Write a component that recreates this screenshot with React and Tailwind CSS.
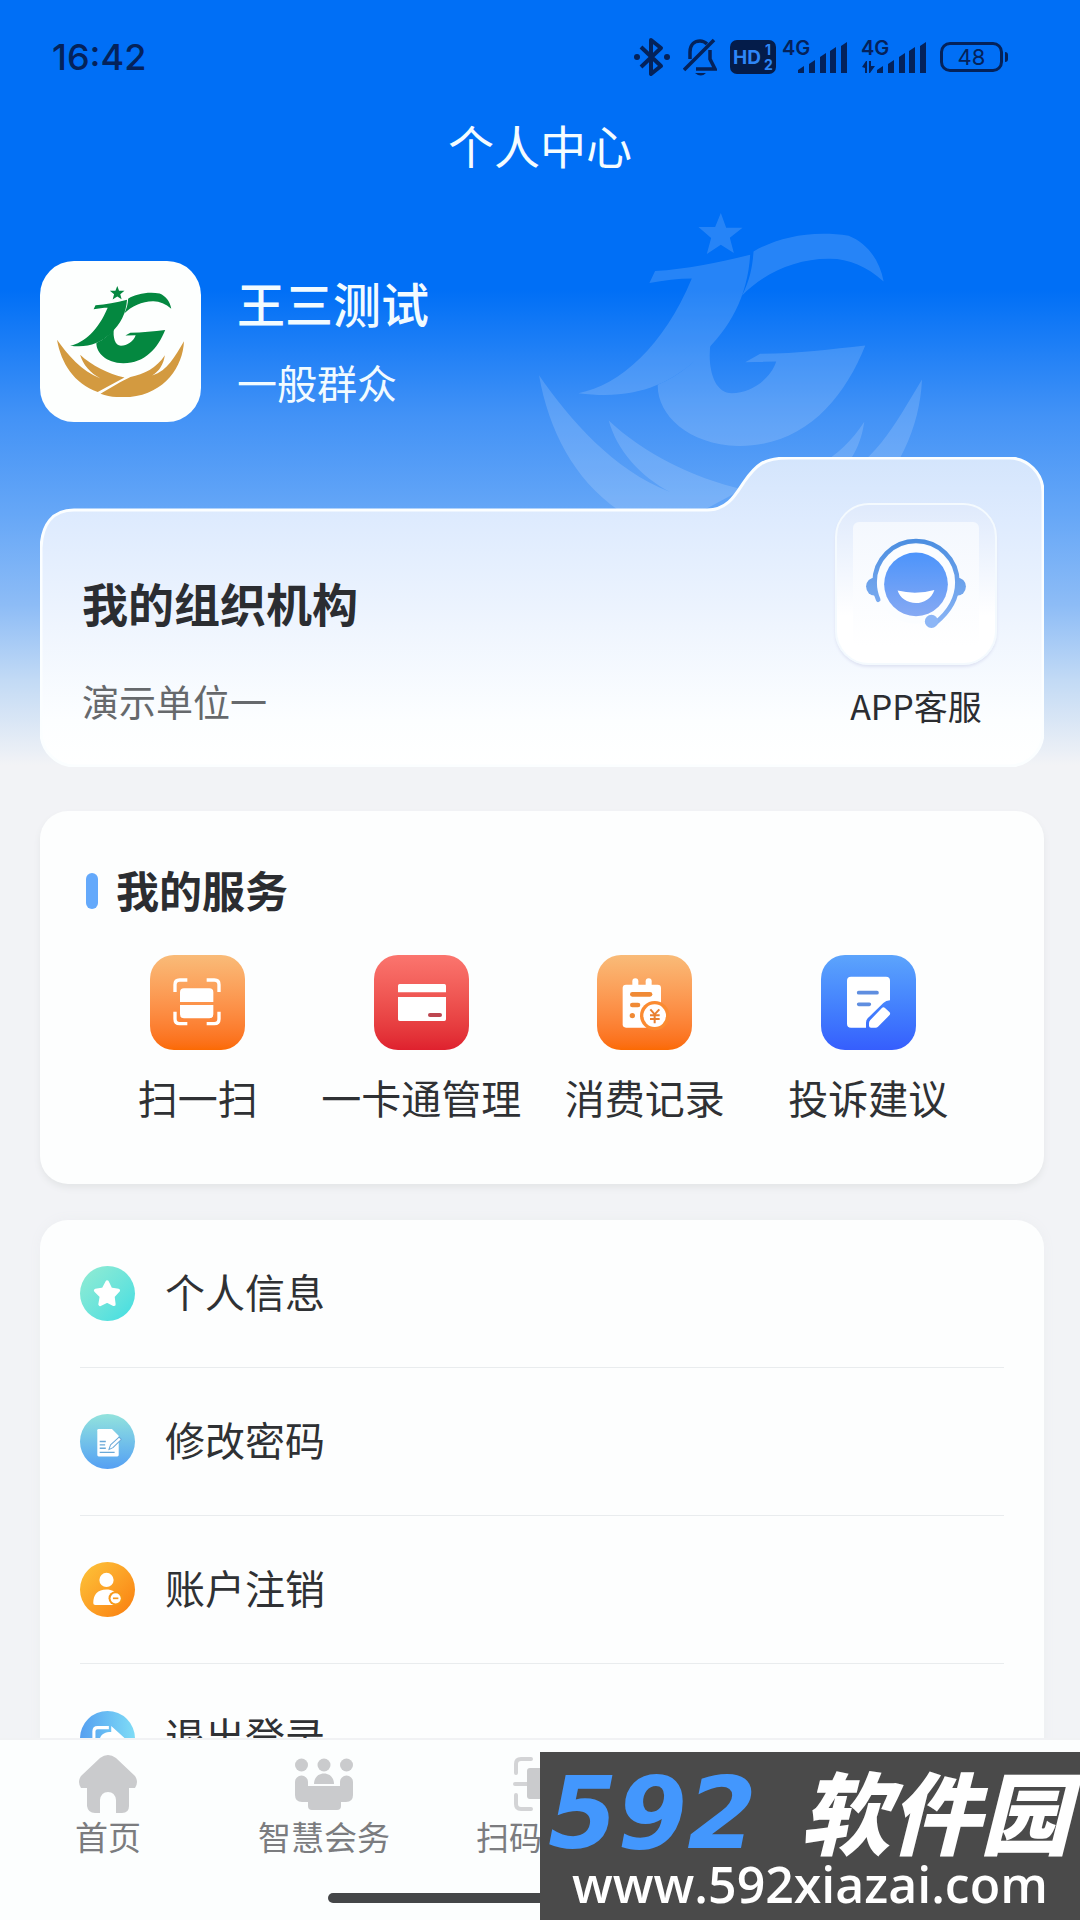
import { useState } from "react";

const INK = "#04225a";

/* ---------- Logo ---------- */

function Logo({ className, letters, hands }) {
    return (
        <svg viewBox="57 40 1148 1010" className={className} aria-hidden="true">
            <g fill={letters}>
                <path d="M602 40 L618 84 L667 84 L629 114 L641 160 L602 135 L560 163 L573 115 L535 82 L585 82 Z" />
                <path d="M405 214 C500 208 590 190 690 165 C682 290 630 385 545 465 C440 565 330 600 175 580 C300 555 430 440 515 236 C475 236 430 242 388 250 Z" />
                <path d="M700 155 C770 115 870 90 985 108 C1040 130 1078 180 1090 245 C1040 200 985 177 930 177 C830 175 730 220 665 288 C690 240 697 200 700 155 Z" />
                <path d="M572 425 C560 500 580 580 635 580 C690 580 750 540 768 485 L675 487 L720 462 C830 462 930 448 1035 437 C970 600 850 740 655 738 C500 735 410 640 413 555 C480 525 530 485 572 425 Z" />
            </g>
            <g fill={hands}>
                <path d="M57 526 C95 740 210 920 425 998 L667 868 C520 835 370 760 266 662 C290 750 360 830 450 876 C280 810 150 660 57 526 Z" />
                <path d="M450 1013 C540 960 640 900 721 862 C840 840 960 780 1032 666 C1020 750 980 810 918 850 C1060 800 1120 680 1205 539 C1195 770 1030 1020 700 1045 C610 1050 530 1040 450 1013 Z" />
            </g>
        </svg>
    );
}

/* ---------- Status bar ---------- */

function Signal({ data }) {
    return (
        <svg viewBox="0 0 66 36" className="h-9 w-[66px] overflow-visible" fill={INK}>
            <text x="0" y="16" fontFamily="Inter, sans-serif" fontSize="20" fontWeight="600">4G</text>
            {data && <path d="M1 28 L5 22 H6 V34 H4 V29 Z M8 22 H10 V27 L14 27 L9 34 H8 Z" />}
            <path d="M16 34 v-3 l6 -4 v7z M27 34 v-9 l6 -4 v13z M38 34 v-16 l6 -4 v20z M48 34 v-22 l6 -4 v26z M59 34 v-27 l6 -4 v31z" />
        </svg>
    );
}

function StatusBar() {
    return (
        <div className="flex h-[114px] items-center justify-between pr-[72px] pl-[52px] text-[#04225a]">
            <span className="font-['Inter',sans-serif] text-[36px] leading-none font-medium">16:42</span>
            <div className="flex items-center gap-[13px]">
                <svg viewBox="0 0 36 40" className="h-10 w-9" fill="none" stroke={INK} strokeWidth="4" strokeLinejoin="round">
                    <path d="M7 10 L27 29 L17 37 V3 L27 11 L7 30" />
                    <circle cx="3" cy="20" r="3" fill={INK} stroke="none" />
                    <circle cx="33" cy="20" r="3" fill={INK} stroke="none" />
                </svg>
                <svg viewBox="0 0 34 40" className="h-10 w-[34px]" fill="none" stroke={INK} strokeWidth="3.5">
                    <path d="M7 22 V15 C7 7 12 4 17 4 C20 4 22 5 24 7" />
                    <path d="M27 13 V22 L32 32 H13" />
                    <path d="M1 33 L31 3" />
                    <path d="M12 36 h11 q-5 5 -11 0z" fill={INK} stroke="none" />
                </svg>
                <div className="flex items-center gap-[6px]">
                    <svg viewBox="0 0 46 34" className="h-[34px] w-[46px]">
                        <rect width="46" height="34" rx="7" fill="#041c4a" />
                        <g fill="#2d86f7" fontFamily="Inter, sans-serif" fontWeight="700">
                            <text x="3" y="24" fontSize="19">HD</text>
                            <text x="35" y="15" fontSize="14">1</text>
                            <text x="34" y="30" fontSize="14">2</text>
                        </g>
                    </svg>
                    <Signal />
                </div>
                <Signal data />
                <div className="flex items-center gap-[2px]">
                    <span className="flex h-[30px] w-[63px] items-center justify-center rounded-[10px] border-3 border-[#04225a] font-['Inter',sans-serif] text-[22px] leading-none">48</span>
                    <span className="h-[10px] w-[3px] rounded-r-sm bg-[#04225a]" />
                </div>
            </div>
        </div>
    );
}

/* ---------- Organisation card ---------- */

function HeadsetIcon() {
    return (
        <svg viewBox="738 292 308 277" className="h-[91px] w-[102px]">
            <defs>
                <linearGradient id="headset" gradientUnits="userSpaceOnUse" x1="0" y1="294" x2="0" y2="567">
                    <stop offset="0" stopColor="#4b8ee0" />
                    <stop offset="1" stopColor="#8db6f6" />
                </linearGradient>
                <linearGradient id="face" x1="0" y1="0" x2="0" y2="1">
                    <stop offset="0" stopColor="#4c94fb" />
                    <stop offset="1" stopColor="#86a9f3" />
                </linearGradient>
            </defs>
            <circle cx="768" cy="440" r="28" fill="url(#headset)" />
            <circle cx="1016" cy="440" r="28" fill="url(#headset)" />
            <circle cx="892" cy="432" r="121" fill="#fbfdff" />
            <path d="M777 480 C768 460 766 445 766 427 A126 126 0 0 1 1018 427 C1018 480 990 520 950 552" fill="none" stroke="url(#headset)" strokeWidth="14" strokeLinecap="round" />
            <circle cx="892" cy="433" r="97" fill="url(#face)" />
            <path d="M836 452 Q892 466 948 450 C940 476 915 490 892 490 C866 490 842 474 836 452 Z" fill="#fff" />
            <circle cx="939" cy="546" r="20" fill="#8db6f6" />
        </svg>
    );
}

function OrgCard() {
    return (
        <section className="relative mt-[35px] flex h-[310px] justify-between pr-[47px] pl-[42px]">
            {/* Folder shaped backdrop */}
            <svg viewBox="0 0 1004 310" preserveAspectRatio="none" className="absolute inset-0 h-full w-full" aria-hidden="true">
                <defs>
                    <linearGradient id="folder" x1="0" y1="0" x2="0" y2="1">
                        <stop offset="0" stopColor="#d4e5fc" />
                        <stop offset="0.2" stopColor="#deebfe" />
                        <stop offset="0.55" stopColor="#eff5fe" />
                        <stop offset="0.85" stopColor="#fcfeff" />
                        <stop offset="1" stopColor="#ffffff" />
                    </linearGradient>
                </defs>
                <path
                    d="M1 91 C2 68 12 53 34 53 H667 C687 53 695 39 704 25 C716 8 723 1 749 1 H969 A34 34 0 0 1 1003 35 V275 A34 34 0 0 1 969 309 H35 A34 34 0 0 1 1 275 Z"
                    fill="url(#folder)"
                    stroke="#fbfeff"
                    strokeWidth="3"
                />
            </svg>
            <div className="relative pt-[115px]">
                <h2 className="text-[46px] leading-[60px] font-bold text-[#2b2d31]">我的组织机构</h2>
                <p className="mt-[45px] text-[37px] leading-[48px] text-[#66696c]">演示单位一</p>
            </div>
            <button type="button" className="relative flex flex-col items-center self-start pt-[46px]">
                <span className="flex h-[162px] w-[162px] justify-center rounded-[34px] border-2 border-[#f4fafe] bg-linear-to-b from-[#dfeafc] to-white to-70% pt-[17px] shadow-[0_2px_3px_#dfe3f3]">
                    <span className="flex h-[124px] w-[126px] justify-center rounded-md bg-linear-to-b from-[#f4f8fe] to-white pt-4">
                        <HeadsetIcon />
                    </span>
                </span>
                <span className="mt-[17px] text-[34px] leading-[48px] text-[#2b2d31]">APP客服</span>
            </button>
        </section>
    );
}

/* ---------- Services ---------- */

function ScanGlyph() {
    return (
        <svg viewBox="0 0 285 285" className="h-full w-full">
            <path d="M75 111 V89 Q75 75 89 75 H112 M170 75 H193 Q207 75 207 89 V111 M75 170 V192 Q75 206 89 206 H112 M170 206 H193 Q207 206 207 192 V170" fill="none" stroke="#fff" strokeWidth="10" />
            <path d="M90 141 V112 Q90 100 102 100 H178 Q190 100 190 112 V141 Z M90 150 H190 V178 Q190 190 178 190 H102 Q90 190 90 178 Z" fill="#fff" />
        </svg>
    );
}

function CardGlyph() {
    return (
        <svg viewBox="0 0 285 285" className="h-full w-full" fill="#fff">
            <path d="M72 112 V92 Q72 87 77 87 H211 Q216 87 216 92 V112 Z M72 126 H216 V193 Q216 198 211 198 H77 Q72 198 72 193 Z" />
            <rect x="162" y="174" width="42" height="12" rx="6" fill="#bd4650" />
        </svg>
    );
}

function RecordGlyph() {
    return (
        <svg viewBox="0 0 285 285" className="h-full w-full">
            <g fill="#fff">
                <rect x="77" y="89" width="115" height="129" rx="10" />
                <rect x="106" y="70" width="18" height="30" rx="9" />
                <rect x="146" y="70" width="18" height="30" rx="9" />
            </g>
            <g fill="#f08a35">
                <rect x="99" y="111" width="67" height="14" rx="7" />
                <rect x="99" y="143" width="31" height="14" rx="7" />
                <circle cx="106" cy="182" r="8" />
            </g>
            <circle cx="173" cy="182" r="44" fill="#fb8b31" />
            <circle cx="173" cy="182" r="34" fill="#fff" />
            <path d="M160 163 L173 178 L187 163 M173 178 V205 M159 181 H188 M159 192 H188" fill="none" stroke="#e98030" strokeWidth="6" />
        </svg>
    );
}

function SuggestGlyph() {
    return (
        <svg viewBox="0 0 285 285" className="h-full w-full" fill="#fff">
            <path d="M90 65 H195 Q207 65 207 77 V136 Q195 136 187 144 L140 190 Q135 195 135 203 V218 H90 Q78 218 78 206 V77 Q78 65 90 65 Z" />
            <path d="M144 212 V204 Q144 199 148 195 L182 160 Q187 154 192 159 L205 171 Q210 176 205 181 L171 215 Q168 218 164 218 H150 Q144 218 144 212 Z" />
            <path d="M113 113 H168 M113 148 H145" stroke="#5f8ee0" strokeWidth="11" strokeLinecap="round" />
        </svg>
    );
}

const services = [
    { label: "扫一扫", Glyph: ScanGlyph, bg: "bg-linear-to-b from-[#f9bb78] to-[#fb6a02]" },
    { label: "一卡通管理", Glyph: CardGlyph, bg: "bg-linear-to-b from-[#fb756e] to-[#df202e]" },
    { label: "消费记录", Glyph: RecordGlyph, bg: "bg-linear-to-b from-[#f9bb78] to-[#fb6a02]" },
    { label: "投诉建议", Glyph: SuggestGlyph, bg: "bg-linear-to-b from-[#5ca4fc] to-[#365efd]" },
];

function Services() {
    return (
        <section className="mt-11 rounded-[28px] bg-[#fdfefe] pt-[54px] pr-16 pb-[63px] pl-[46px] shadow-[0_4px_6px_#e4e6e8]">
            <div className="flex items-center gap-[18px]">
                <span className="h-9 w-3 rounded-full bg-[#64a9fb]" />
                <h2 className="pb-1 text-[43px] leading-[48px] font-bold text-[#2b2d31]">我的服务</h2>
            </div>
            <div className="mt-[38px] grid grid-cols-4">
                {services.map(({ label, Glyph, bg }) => (
                    <button key={label} type="button" className="flex flex-col items-center">
                        <span className={`h-[95px] w-[95px] rounded-[24px] ${bg}`}>
                            <Glyph />
                        </span>
                        <span className="mt-[23px] text-[40px] leading-[48px] whitespace-nowrap text-[#2f3134]">{label}</span>
                    </button>
                ))}
            </div>
        </section>
    );
}

/* ---------- Settings list ---------- */

function StarGlyph() {
    return (
        <svg viewBox="0 0 162 162" className="h-full w-full">
            <path d="M80 47 L90 68 L113 72 L97 89 L100 113 L80 103 L59 113 L63 89 L46 72 L69 68 Z" fill="#fff" stroke="#fff" strokeWidth="10" strokeLinejoin="round" />
        </svg>
    );
}

function EditGlyph() {
    return (
        <svg viewBox="0 0 162 162" className="h-full w-full">
            <path d="M55 44 H94 L114 64 V121 Q114 125 110 125 H55 Q51 125 51 121 V48 Q51 44 55 44 Z" fill="#fff" />
            <path d="M58 81 H76 M58 91 H74 M58 101 H76 M58 113 H102" stroke="#6aa9d8" strokeWidth="4" />
            <path d="M85 105 L90 91 L115 68 L122 75 L97 99 Z" fill="#fff" stroke="#6aa9d8" strokeWidth="3" strokeLinejoin="round" />
        </svg>
    );
}

function UserGlyph() {
    return (
        <svg viewBox="0 0 162 162" className="h-full w-full">
            <circle cx="78" cy="53" r="21" fill="#fff" />
            <path d="M39 121 C39 95 52 81 78 81 C94 81 105 88 110 98 V127 H45 Q39 127 39 121 Z" fill="#fff" />
            <circle cx="105" cy="107" r="21" fill="#f89a1a" />
            <circle cx="105" cy="107" r="15" fill="#fff" />
            <path d="M97 107 H113" stroke="#f59a20" strokeWidth="5" />
        </svg>
    );
}

function ExitGlyph() {
    return (
        <svg viewBox="0 0 162 162" className="h-full w-full">
            <path d="M85 49 H52 Q41 49 41 60 V112 Q41 123 52 123 H100" fill="none" stroke="#fff" strokeWidth="9" />
            <path d="M56 108 C54 76 64 62 92 62 V44 L136 84 L92 118 V97 C76 95 65 97 56 108 Z" fill="#fff" />
        </svg>
    );
}

const settings = [
    { label: "个人信息", Glyph: StarGlyph, bg: "bg-linear-to-br from-[#92ecd2] to-[#3cdde2]" },
    { label: "修改密码", Glyph: EditGlyph, bg: "bg-linear-to-b from-[#93e3dc] to-[#559ff3]" },
    { label: "账户注销", Glyph: UserGlyph, bg: "bg-linear-to-br from-[#fcc53a] to-[#f97c0a]" },
    { label: "退出登录", Glyph: ExitGlyph, bg: "bg-linear-to-r from-[#559ff0] to-[#7fdcf6]" },
];

function SettingsList() {
    return (
        <section className="mt-9 rounded-[28px] bg-[#fdfefe] px-10 shadow-[0_0_12px_#eceef1]">
            {settings.map(({ label, Glyph, bg }) => (
                <button key={label} type="button" className="flex h-[148px] w-full items-center gap-[30px] border-b border-[#e9ecee] last:border-b-0">
                    <span className={`h-[55px] w-[55px] rounded-full ${bg}`}>
                        <Glyph />
                    </span>
                    <span className="pb-[6px] text-[40px] leading-[48px] text-[#2f3134]">{label}</span>
                </button>
            ))}
        </section>
    );
}

/* ---------- Bottom navigation ---------- */

function HomeGlyph() {
    return (
        <svg viewBox="0 0 58 58" className="h-[58px] w-[58px]" fill="#cacbcd">
            <path d="M29 0 Q33 0 37 3 L56 21 Q60 27 56 33 H50 V51 Q50 58 43 58 H37 V45 Q36 37 29 37 Q22 37 21 45 V58 H16 Q9 58 8 51 V33 H2 Q-2 27 2 21 L21 3 Q25 0 29 0 Z" />
        </svg>
    );
}

function MeetingGlyph() {
    return (
        <svg viewBox="0 0 58 58" className="h-[58px] w-[58px]" fill="#cacbcd">
            <circle cx="6.5" cy="10" r="6.5" />
            <circle cx="29" cy="10" r="6.5" />
            <circle cx="51.5" cy="10" r="6.5" />
            <path d="M19 29 C19 15 39 15 39 29 Z" />
            <path d="M0 27 a6.5 6.5 0 0 1 13 0 v4 h32 v-4 a6.5 6.5 0 0 1 13 0 v13 q0 7 -7 7 h-5 v4 q0 4 -4 4 H17 q-4 0 -4 -4 v-4 H7 q-7 0 -7 -7 z" />
        </svg>
    );
}

function CodeGlyph() {
    return (
        <svg viewBox="0 0 58 58" className="h-[58px] w-[58px]">
            <path d="M5 18 V9 Q5 4 10 4 H20 M38 4 H48 Q53 4 53 9 V18 M5 40 V49 Q5 54 10 54 H20 M38 54 H48 Q53 54 53 49 V40 M4 29 H54" fill="none" stroke="#d3d4d6" strokeWidth="4" strokeLinecap="round" />
            <rect x="16" y="13" width="26" height="31" rx="3" fill="#cacbcd" />
        </svg>
    );
}

const tabs = [
    { label: "首页", Glyph: HomeGlyph, width: "" },
    { label: "智慧会务", Glyph: MeetingGlyph, width: "" },
    { label: "扫码", Glyph: CodeGlyph, width: "w-[128px]" },
];

function BottomNav({ active, onChange }) {
    return (
        <nav className="flex shrink-0 flex-col items-center border-t-2 border-[#f1f2f4] bg-[#fcfefe] pt-[15px] pb-[17px]">
            <div className="grid w-full grid-cols-5">
                {tabs.map(({ label, Glyph, width }) => (
                    <button
                        key={label}
                        type="button"
                        onClick={() => onChange(label)}
                        aria-current={active === label ? "page" : undefined}
                        className="flex flex-col items-center"
                    >
                        <Glyph />
                        <span className={`mt-[3px] text-left text-[33px] leading-[40px] text-[#7b7c7f] ${width}`}>{label}</span>
                    </button>
                ))}
            </div>
            <span className="mt-[37px] h-[10px] w-[424px] rounded-full bg-[#444648]" />
        </nav>
    );
}

function SiteBadge() {
    return (
        <div className="absolute right-0 bottom-0 flex h-[168px] w-1/2 flex-col items-center bg-[#4a4a4a] pt-[12px]">
            <div className="flex h-[92px] w-full items-baseline justify-between pr-[10px] pl-[8px] leading-none whitespace-nowrap italic">
                <span className="font-['DejaVu_Sans',sans-serif] text-[100px] font-bold text-[#4397fd]">592</span>
                <span className="font-['Noto_Sans_CJK_SC',sans-serif] text-[90px] font-black text-white">软件园</span>
            </div>
            <a href="#" className="font-['Open_Sans',sans-serif] text-[50px] leading-[56px] font-semibold text-white">www.592xiazai.com</a>
        </div>
    );
}

export default function App() {
    const [tab, setTab] = useState("");

    return (
        <div className="relative flex h-screen flex-col overflow-hidden bg-[#f2f3f6] font-['Noto_Sans_CJK_SC',sans-serif]">
            <main className="relative min-h-0 flex-1 overflow-y-auto [scrollbar-width:none]">
                {/* Blue header backdrop */}
                <div className="absolute inset-x-0 top-0 h-[770px] bg-[linear-gradient(to_bottom,#006ff6_0px,#006ff6_290px,#4292f6_415px,#66a7f7_515px,#8dbcf6_605px,#c2daf5_680px,#f2f3f6_765px)]" />
                <div className="relative">
                    <StatusBar />
                    <h1 className="text-center text-[46px] leading-[60px] text-[#f4fcff]">个人中心</h1>
                    <div className="relative pr-9 pl-10">
                        <Logo className="absolute top-[39px] right-[158px] h-[337px] w-[383px] opacity-[0.15]" letters="#fff" hands="#fff" />
                        <div className="relative flex items-center gap-[36px] pt-[87px]">
                            <span className="flex h-[161px] w-[161px] items-center justify-center rounded-[34px] bg-[#fdfffe]">
                                <Logo className="w-[127px]" letters="#048840" hands="#d39a40" />
                            </span>
                            <div className="pb-1 text-[#f2fbff]">
                                <p className="text-[48px] leading-[64px] font-medium">王三测试</p>
                                <p className="mt-[20px] text-[40px] leading-[56px]">一般群众</p>
                            </div>
                        </div>
                        <OrgCard />
                        <Services />
                        <SettingsList />
                    </div>
                </div>
            </main>
            <BottomNav active={tab} onChange={setTab} />
            <SiteBadge />
        </div>
    );
}
